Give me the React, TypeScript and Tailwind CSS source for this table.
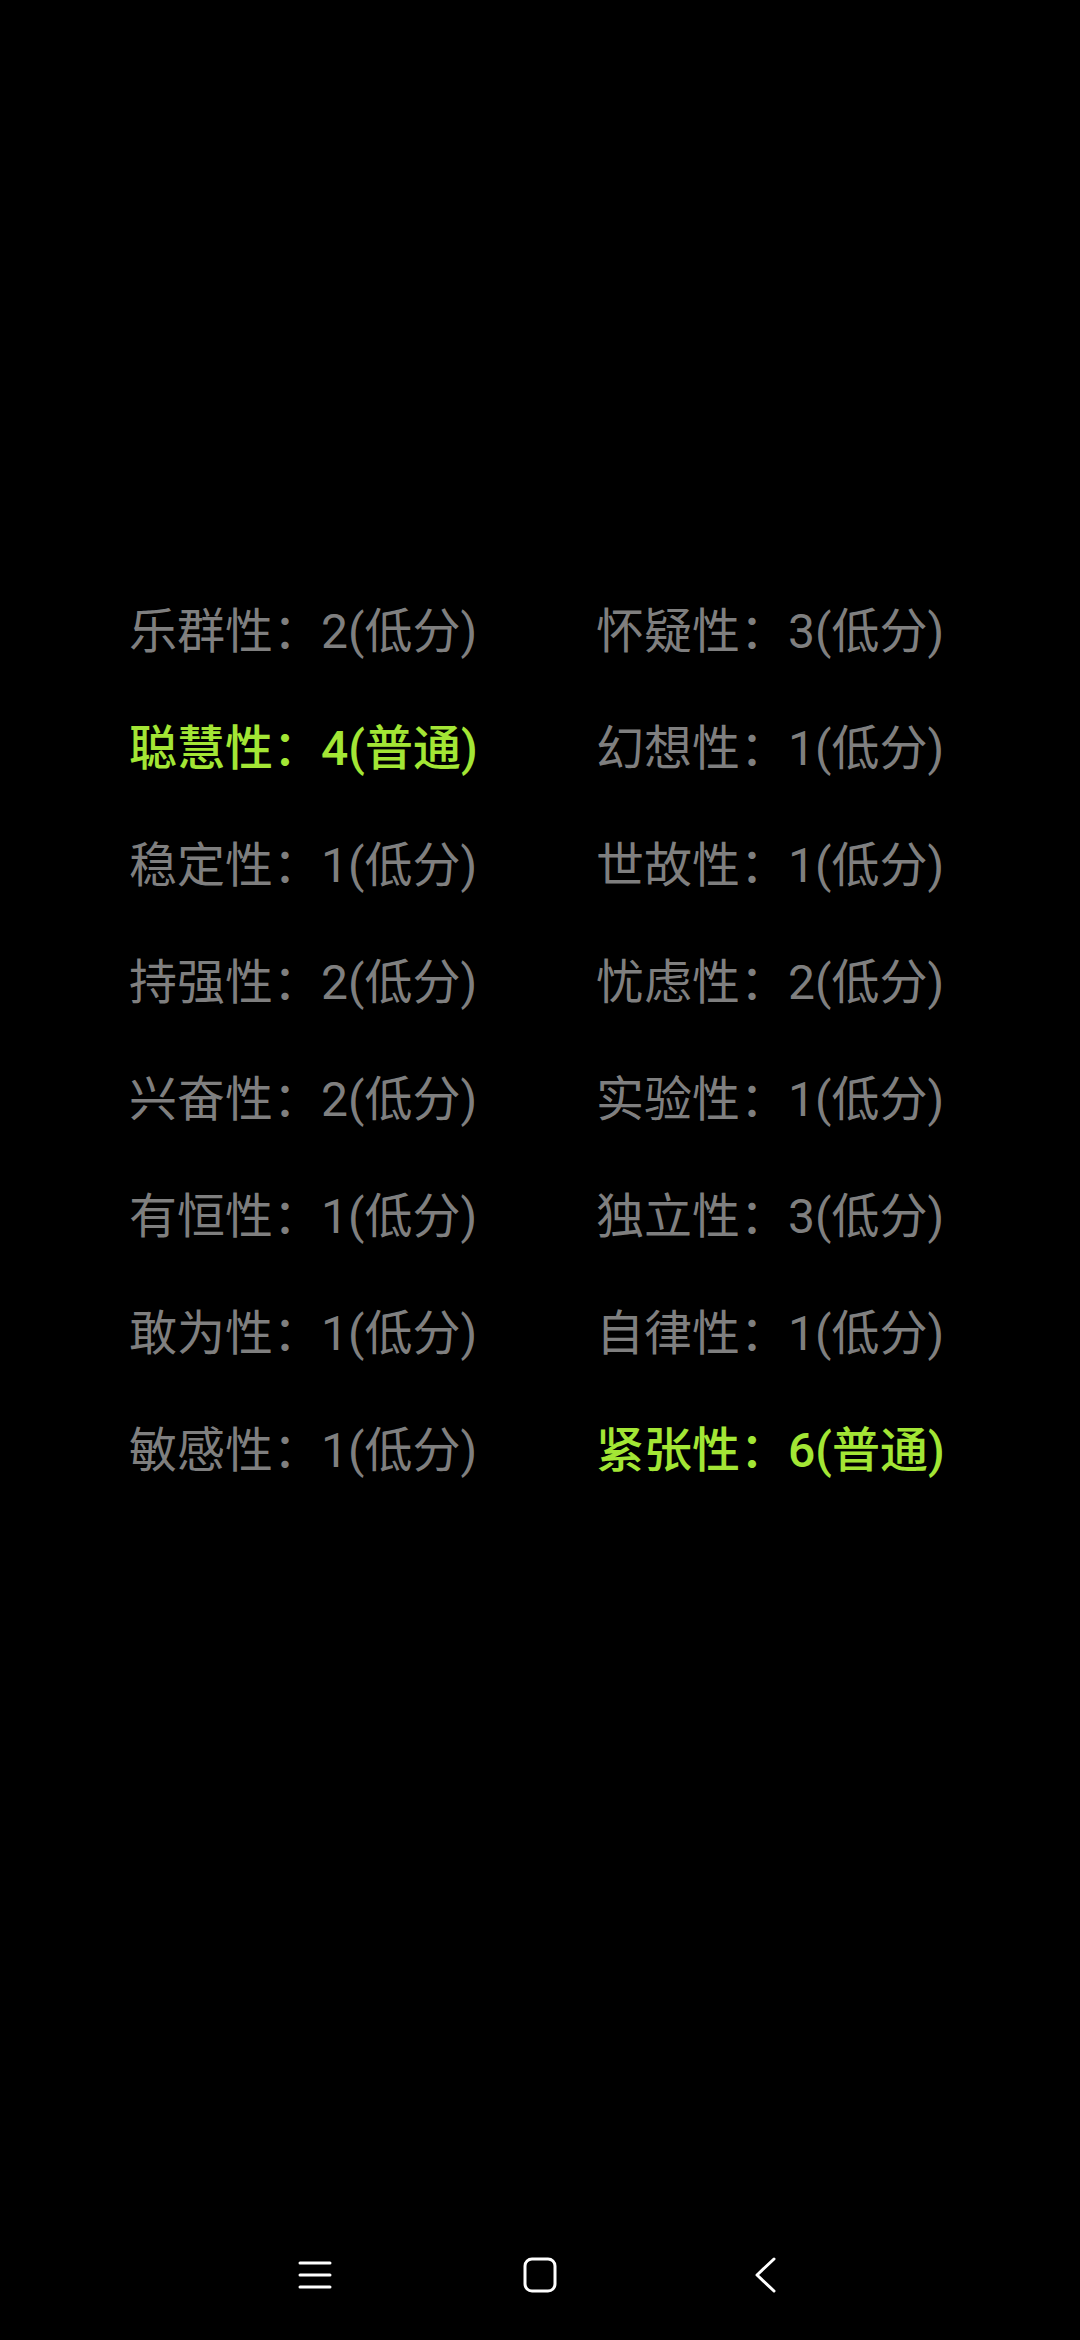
const rows: [string, string, boolean][] = [
  ['乐群性', '2(低分)', false],
  ['聪慧性', '4(普通)', true],
  ['稳定性', '1(低分)', false],
  ['持强性', '2(低分)', false],
  ['兴奋性', '2(低分)', false],
  ['有恒性', '1(低分)', false],
  ['敢为性', '1(低分)', false],
  ['敏感性', '1(低分)', false],
]

const rightRows: [string, string, boolean][] = [
  ['怀疑性', '3(低分)', false],
  ['幻想性', '1(低分)', false],
  ['世故性', '1(低分)', false],
  ['忧虑性', '2(低分)', false],
  ['实验性', '1(低分)', false],
  ['独立性', '3(低分)', false],
  ['自律性', '1(低分)', false],
  ['紧张性', '6(普通)', true],
]

function Item({ name, value, hi }: { name: string; value: string; hi: boolean }) {
  return (
    <div className={hi ? 'font-medium text-[#a3e635]' : 'text-[#7f7f7f]'}>
      {name}：{value}
    </div>
  )
}

export default function App() {
  return (
    <div
      className="flex min-h-[2340px] w-[1080px] flex-col bg-black"
      style={{ fontFamily: "Roboto, 'Noto Sans CJK SC', sans-serif" }}
    >
      <div className="grid grid-cols-[467px_auto] pt-[573px] pl-[129px] text-[48px] leading-[117px]">
        {rows.map((r, i) => (
          <div key={i} className="contents">
            <Item name={r[0]} value={r[1]} hi={r[2]} />
            <Item name={rightRows[i][0]} value={rightRows[i][1]} hi={rightRows[i][2]} />
          </div>
        ))}
      </div>

      <div className="mt-auto flex h-[130px] items-center justify-center gap-[185px]">
        <svg width="40" height="40" viewBox="0 0 40 40" className="text-white">
          <path d="M5 8H35M5 20H35M5 32H35" stroke="currentColor" strokeWidth="3" strokeLinecap="round" />
        </svg>
        <svg width="40" height="40" viewBox="0 0 40 40" className="text-white">
          <rect x="5" y="4" width="30" height="32" rx="7" fill="none" stroke="currentColor" strokeWidth="3" />
        </svg>
        <svg width="40" height="40" viewBox="0 0 40 40" className="text-white">
          <path d="M29 4L12 20L29 36" fill="none" stroke="currentColor" strokeWidth="3" strokeLinecap="round" strokeLinejoin="round" />
        </svg>
      </div>
    </div>
  )
}
